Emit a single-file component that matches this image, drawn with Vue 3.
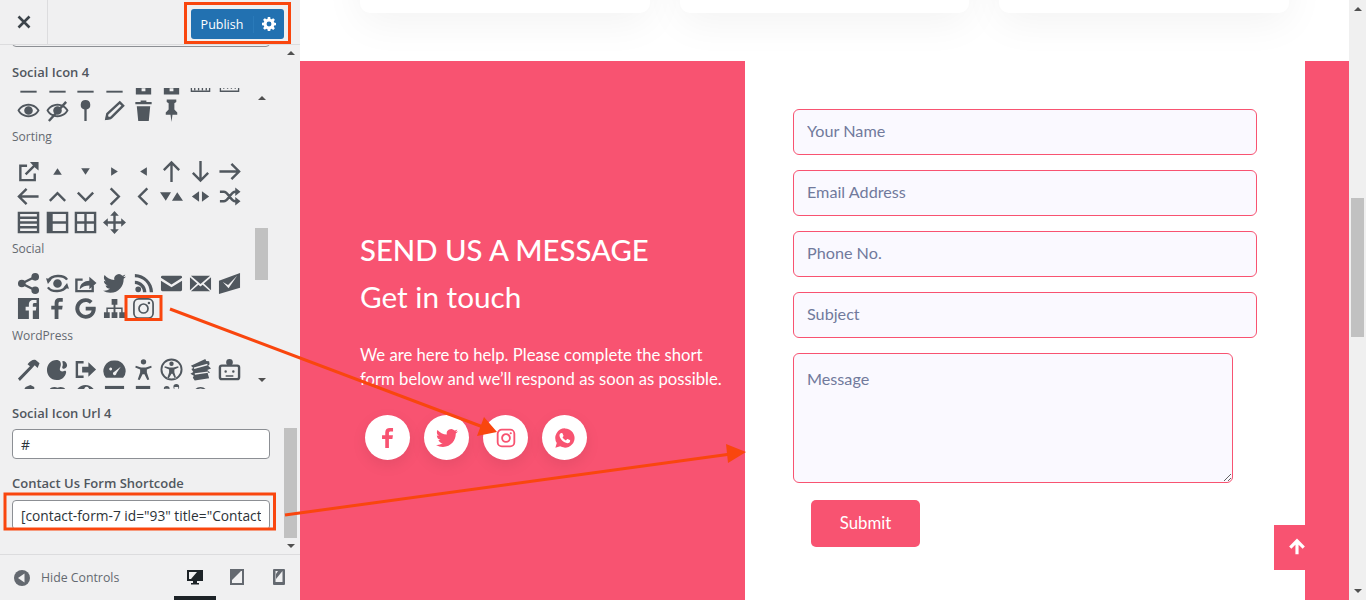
<script setup>
const circle = (cx, cy, r) => `M${cx - r} ${cy}a${r} ${r} 0 1 0 ${2 * r} 0a${r} ${r} 0 1 0 ${-2 * r} 0z`

const instagram = {
  s: 'M7 2h10a5 5 0 0 1 5 5v10a5 5 0 0 1-5 5H7a5 5 0 0 1-5-5V7a5 5 0 0 1 5-5z' + circle(12, 12, 4.7),
  d: circle(17.7, 6.3, 1.3),
  mid: true,
}
const twitter = 'M23.95 4.57a10 10 0 0 1-2.82.77 4.96 4.96 0 0 0 2.16-2.72c-.95.55-2 .96-3.12 1.19a4.92 4.92 0 0 0-8.38 4.48C7.69 8.1 4.07 6.13 1.64 3.16a4.82 4.82 0 0 0-.67 2.48c0 1.7.87 3.21 2.19 4.1a4.9 4.9 0 0 1-2.23-.61v.06c0 2.38 1.7 4.38 3.95 4.83a5 5 0 0 1-2.21.08 4.94 4.94 0 0 0 4.6 3.42A9.87 9.87 0 0 1 0 19.54a14 14 0 0 0 7.55 2.21c9.05 0 14-7.5 14-13.98 0-.21 0-.42-.02-.63a9.94 9.94 0 0 0 2.46-2.55z'
const fbF = 'M9 23V13H5.5V9H9V6c0-3.5 2-5 5-5h3.5v4H15c-1.5 0-2 .7-2 2v2h4.4l-.6 4H13v10z'

const topIcons = [
  { d: 'M3.5 18.5h17v2h-17z' },
  { d: 'M3.5 18.5h17v2h-17z' },
  { d: 'M3.5 18.5h17v2h-17z' },
  { d: 'M3.5 18.5h17v2h-17z' },
  { d: 'M4 12h16v10.5H4zM10 16h4v3h-4z' },
  { d: 'M4 12h16v10.5H4zM10 16h4v3h-4z' },
  { s: 'M2.5 12v7h19v-7M6 15v3M10 15v3M14 15v3M18 15v3' , thin: true },
  { s: 'M2.5 12v7h19v-7M6 15v1.5M10 15v1.5M14 15v1.5M18 15v1.5', thin: true },
  { d: 'M12 5C6 5 2 9 .5 12 2 15 6 19 12 19s10-4 11.5-7C22 9 18 5 12 5zm0 2c4.5 0 7.8 2.7 9.3 5-1.5 2.3-4.8 5-9.3 5s-7.8-2.7-9.3-5C4.2 9.7 7.5 7 12 7zM12 7.5a4.5 4.5 0 1 0 0 9 4.5 4.5 0 0 0 0-9z' },
  { d: 'M12 5C6 5 2 9 .5 12 2 15 6 19 12 19s10-4 11.5-7C22 9 18 5 12 5zm0 2c4.5 0 7.8 2.7 9.3 5-1.5 2.3-4.8 5-9.3 5s-7.8-2.7-9.3-5C4.2 9.7 7.5 7 12 7zM12 7.5a4.5 4.5 0 1 0 0 9 4.5 4.5 0 0 0 0-9z', s: 'M3 23 21 3' },
  { d: 'M12 1a5 5 0 0 0-1.2 9.85V23h2.4V10.85A5 5 0 0 0 12 1z' },
  { s: 'M17.5 3.5l3.5 3.5L8.5 19.5 3.5 20.5l1-5z', d: 'M2.5 22l1-6 5 5z' },
  { d: 'M9 1.5h6V3h5.5v2.5h-17V3H9zM5 7.5h14L17.5 23h-11z' },
  { d: 'M7 .5h10V3l-2 1.5V11l3 3v2.5h-5L12 24l-1-7.5H6V14l3-3V4.5L7 3z' },
]
const sortIcons = [
  { s: 'M10.5 6H3.5v15h15v-7M9 15 19.5 4.5', d: 'M13.5 2h9v9L19 8 16 5z' },
  { d: 'M7.5 15.5 12 8.5l4.5 7z' },
  { d: 'M7.5 8.5h9L12 15.5z' },
  { d: 'M8.5 7.5 15.5 12l-7 4.5z' },
  { d: 'M15.5 7.5v9L8.5 12z' },
  { s: 'M12 23V3M4 10.5 12 2.5l8 8' },
  { s: 'M12 1v20M4 13.5l8 8 8-8' },
  { s: 'M1.5 12h20M14 4l8 8-8 8' },
  { s: 'M22.5 12h-20M10 4l-8 8 8 8' },
  { s: 'M4 16.5 12 8.5l8 8' },
  { s: 'M4 8 12 16l8-8' },
  { s: 'M8 3.5 16.5 12 8 20.5' },
  { s: 'M16 3.5 7.5 12l8.5 8.5' },
  { d: 'M0 7.5h11.5L6 16.5zM12.5 16.5 18 7.5l6 9z' },
  { d: 'M10.5 6.5v11L3 12zM13.5 6.5v11L21 12z' },
  { s: 'M2 7h4c5 0 7 10 12 10h2M2 17h4c5 0 7-10 12-10h2', d: 'M18 2.5 23.5 7 18 11.5zM18 12.5l5.5 4.5-5.5 4.5z' },
  { s: 'M2 2h20v20H2zM2 7h20M2 12h20M2 17h20' },
  { s: 'M2 2h20v20H2zM2 12h20', d: 'M2 2h5v20H2z' },
  { s: 'M2 2h20v20H2zM2 12h20M12 2v20' },
  { s: 'M12 4v16M4 12h16', d: 'M12 0l4.5 5h-9zM12 24l-4.5-5h9zM0 12l5-4.5v9zM24 12l-5 4.5v-9z' },
]
const socialIcons = [
  { d: circle(19, 5, 4) + circle(5, 12, 4) + circle(19, 19, 4), s: 'M19 5 5 12l14 7' },
  { s: 'M2.5 9C6 3 18 2.5 22 8M21.5 15C18 21 6 21.5 2 16', d: circle(12, 12, 4.5) + 'M0 6.5l6 1-4 5zM24 17.5l-6-1 4-5z' },
  { s: 'M9 8H2.5v12h17v-6', d: 'M6 18c0-6 5-9 10-9V5l7.5 6.5L16 18v-4c-4 0-7 1-10 4z' },
  { d: twitter },
  { d: 'M3 2v3.5c8.5 0 15.5 7 15.5 15.5H22C22 11 13 2 3 2zm0 7v3.5c4.5 0 8.5 4 8.5 8.5H15C15 14.5 9.5 9 3 9z' + circle(6.5, 18, 3) },
  { d: 'M2.5 4h19A1.5 1.5 0 0 1 23 5.5V6l-11 7L1 6v-.5A1.5 1.5 0 0 1 2.5 4zM1 9l11 7 11-7v9.5a1.5 1.5 0 0 1-1.5 1.5h-19A1.5 1.5 0 0 1 1 18.5z' },
  { d: 'M2 4h20L12 12.5zM1 5.5 8.5 12 1 19zM23 5.5 15.5 12 23 19zM2 20l7.8-6.8L12 15l2.2-1.8L22 20z' },
  { d: 'M1 9 23 1v15.5L1 23zM5 10.5l5.5 3L20 4l-9 13z' },
  { d: 'M1 1h22v22h-6.5v-9h3.2l.5-3.7h-3.7V8c0-1.1.5-1.8 2-1.8h1.9V3h-3c-3.6 0-5 2.1-5 5v2.3H9V14h3.4v9H1z' },
  { d: fbF },
  { d: 'M12.2 10.3v3.8h6.2c-.7 3-3 4.6-6.2 4.6a6.7 6.7 0 0 1 0-13.4c1.7 0 3.2.6 4.4 1.7l2.8-2.8A10.7 10.7 0 1 0 12.2 22.7c6.2 0 10.5-4.4 10.5-10.6 0-.6 0-1.2-.2-1.8z' },
  { d: 'M9 2h6v6h-2v3h7.5v5H23v6h-6v-6h2v-3.5h-6V16h2v6H9v-6h2v-3.5H5V16h2v6H1v-6h2.5v-5H11V8H9z' },
  instagram,
]
const wpIcons = [
  { d: 'M1 21.5 13.5 8.5 11 6.500C14 2.500 17 1 19.500 2L23.500 5.500 21.500 10.500 18.500 7.500 15.500 11 3 24z' },
  { d: 'M11 2C5 2 1 7 1 12.5S5 23 11 23c5 0 9-3 10-8 .3-1.5-1-2-2-1.5-2 1-4 .5-4.5-1-.5-2 1-3.500 1-5.500s-.5-3-1-3.500C13.500 2.500 12 2 11 2zM17.500 3c2.500 0 4.500 2 4.500 4.500S19 12 17.500 11c-1-.8-.5-2 0-3.500s-1-4.500 0-4.500z' },
  { s: 'M10 4.500H3v15h7', d: 'M8.5 9H15V4.500l8 7.500-8 7.500V15H8.5z' },
  { d: 'M12 2.500A11 11 0 0 0 3 20.500h18A11 11 0 0 0 12 2.500zM6.500 11.500a1.500 1.500 0 1 1 0 .01zM14 16l4.500-7-7 5.500a1.800 1.800 0 1 0 2.500 1.500z' },
  { d: circle(12, 4, 2.8) + 'M4 8 9.500 10h5L20 8l.6 1.800L15.500 12v3l2.500 7.500-2 .5L13 17h-2l-3 6-2-.5L8.500 15v-3L3.400 9.800z' },
  { d: circle(12, 12, 11.5) + circle(12, 12, 9.500) + circle(12, 6, 2.3) + 'M5 8.500 10 10h4l5-1.500.4 1.500-4.400 2v3l2 6-1.500.5-2.500-5h-1L9 21.500 7.500 21 9.500 15v-3L4.600 10z' },
  { d: 'M2 8 17 1l1 2 3 .5.5 3L20 8l3 3-4 1.500 3 2.500-2.500 1L21 21 6 23.500l-2-3 1-2-3.500-2 3-2-2-3 2-1zM5 10 19 6l.5 1.500L5.500 11.500zM6 16l14-2 .2 1.500-14 2z' },
  { s: 'M4 8h16a2 2 0 0 1 2 2v10a2 2 0 0 1-2 2H4a2 2 0 0 1-2-2V10a2 2 0 0 1 2-2z', d: circle(12, 4.5, 3.5) + circle(8, 14, 1.3) + circle(16, 14, 1.3) + 'M8 18h8v1.500H8z' },
  { d: 'M6 8l3-5 5-2 4 2v5z' },
  { d: 'M3 8c0-4 5-6 9-4 4-2 9 0 9 4z' },
  { d: 'M2 8c2-5 6-7 10-7s8 2 10 7zM12 3a3 3 0 0 0 0 5h3a3 3 0 0 0-3-5z' },
  { d: 'M2 2h20v6H2z' },
  { d: 'M4 2h15v6H4z' },
  { d: circle(7, 5, 3) + circle(17, 3, 3) + 'M5 5h4v3H5zM15 3h4v5h-4z' },
  { d: 'M5 8a7.500 7.500 0 0 1 14 0h-2a5.500 5.500 0 0 0-10 0z' },
]
const groups = [
  { items: topIcons },
  { label: 'Sorting', items: sortIcons },
  { label: 'Social', items: socialIcons },
  { label: 'WordPress', items: wpIcons },
]
const fields = ['Your Name', 'Email Address', 'Phone No.', 'Subject']
</script>

<template>
  <div class="screen">
    <aside class="sidebar">
      <header class="topbar">
        <button class="close" aria-label="Close">
          <svg viewBox="0 0 20 20" width="20" height="20"><path d="M4.500 4.500l11 11M15.500 4.500l-11 11" /></svg>
        </button>
        <div class="publish">
          <span class="publish-label">Publish</span>
          <span class="publish-gear">
            <svg viewBox="0 0 20 20" width="14" height="14">
              <path fill-rule="evenodd" d="M8.300 0h3.400l.5 2.700 1.500.6L16 1.700l2.400 2.400-1.600 2.300.6 1.500 2.600.5v3.400l-2.600.5-.6 1.500 1.600 2.300-2.400 2.400-2.300-1.600-1.500.6-.5 2.700H8.300l-.5-2.700-1.500-.6L4 18.300l-2.400-2.400 1.600-2.300-.6-1.500L0 11.700V8.300l2.600-.5.6-1.500-1.600-2.300L4 1.700l2.300 1.600 1.500-.6zM10 6.500a3.500 3.500 0 1 0 0 7 3.500 3.500 0 0 0 0-7z" />
            </svg>
          </span>
        </div>
      </header>

      <div class="panel">
        <div class="controls">
          <div class="stub-input"></div>
          <div class="ctl-label first">Social Icon 4</div>
          <div class="picker">
            <div class="picker-window">
              <div class="picker-inner">
                <template v-for="(g, gi) in groups" :key="gi">
                  <div v-if="g.label" class="group-label">{{ g.label }}</div>
                  <div class="icon-grid">
                    <svg v-for="(ic, i) in g.items" :key="i" class="pick-icon" viewBox="0 0 24 24" width="23" height="23">
                      <path v-if="ic.d" class="fill" fill-rule="evenodd" :d="ic.d" />
                      <path v-if="ic.s" class="line" :class="{ thin: ic.thin, mid: ic.mid }" :d="ic.s" />
                    </svg>
                  </div>
                </template>
              </div>
            </div>
            <div class="sbar">
              <i class="tri-up"></i>
              <b class="thumb pick-thumb"></b>
              <i class="tri-down pick-down"></i>
            </div>
          </div>
          <div class="ctl-label">Social Icon Url 4</div>
          <input class="ctl-input" value="#" />
          <div class="ctl-label">Contact Us Form Shortcode</div>
          <input class="ctl-input short" value='[contact-form-7 id="93" title="Contact' />
        </div>
        <div class="sbar panel-bar">
          <i class="tri-up"></i>
          <b class="thumb panel-thumb"></b>
          <i class="tri-down panel-down"></i>
        </div>
      </div>

      <footer class="foot">
        <span class="hide">
          <svg viewBox="0 0 16 16" width="16" height="16">
            <circle cx="8" cy="8" r="8" fill="#646970" />
            <path d="M10.500 3.500v9L4 8z" fill="#f0f0f1" />
          </svg>
          Hide Controls
        </span>
        <div class="devices">
          <span class="device active">
            <svg viewBox="0 0 20 20" width="20" height="20"><path fill-rule="evenodd" d="M2 3h16v11h-6v2h2v1.500H6V16h2v-2H2zM4 5v7h2l6-7z" fill="#1d2327" /></svg>
          </span>
          <span class="device">
            <svg viewBox="0 0 20 20" width="20" height="20"><path fill-rule="evenodd" d="M3 2h14v16H3zM5 4v12h10V4zM5 4h9L5 13z" fill="#646970" /></svg>
          </span>
          <span class="device">
            <svg viewBox="0 0 20 20" width="20" height="20"><path fill-rule="evenodd" d="M5 2h10a1 1 0 0 1 1 1v14a1 1 0 0 1-1 1H5a1 1 0 0 1-1-1V3a1 1 0 0 1 1-1zM6.500 4v11h7V4zM9 4h4.500L7 12V7z" fill="#646970" /></svg>
          </span>
        </div>
      </footer>
    </aside>

    <main class="page">
      <div class="cards">
        <div class="card"></div>
        <div class="card"></div>
        <div class="card"></div>
      </div>
      <section class="contact">
        <div class="intro">
          <h3>SEND US A MESSAGE</h3>
          <h4>Get in touch</h4>
          <p>We are here to help. Please complete the short form below and we’ll respond as soon as possible.</p>
          <div class="socials">
            <a class="soc">
              <svg viewBox="0 0 24 24" width="22" height="22"><path :d="fbF" /></svg>
            </a>
            <a class="soc">
              <svg viewBox="0 0 24 24" width="22" height="22"><path :d="twitter" /></svg>
            </a>
            <a class="soc">
              <svg viewBox="0 0 24 24" width="20" height="20">
                <path class="ig" :d="instagram.s" />
                <path :d="instagram.d" />
              </svg>
            </a>
            <a class="soc">
              <svg viewBox="0 0 24 24" width="22" height="22">
                <path fill-rule="evenodd" d="M12 1.500A10.500 10.500 0 0 0 3 17.500L1.500 22.500l5.200-1.400A10.500 10.500 0 1 0 12 1.500zM8.300 6.500c.4 0 .8 0 1 .5l1 2.400c.1.300 0 .6-.2.900l-.8 1c.8 1.500 2 2.600 3.700 3.400l1.100-1.300c.2-.3.500-.3.800-.2l2.300 1.100c.4.200.5.500.4.900-.2 1.600-1.500 2.500-3 2.400-4-.4-8.400-4.400-8.600-8.200-.1-1.300.8-2.900 2.300-2.900z" />
              </svg>
            </a>
          </div>
        </div>
        <form class="form" @submit.prevent>
          <input v-for="f in fields" :key="f" class="field" :placeholder="f" />
          <textarea class="field area" placeholder="Message"></textarea>
          <button class="submit">Submit</button>
        </form>
        <div class="rest"></div>
      </section>
      <a class="to-top">
        <svg viewBox="0 0 16 16" width="18" height="18"><path d="M8 14.500V3M2 8.500 8 2.500l6 6" /></svg>
      </a>
    </main>

    <div class="sbar page-bar">
      <i class="tri-up"></i>
      <b class="thumb page-thumb"></b>
      <i class="tri-down page-down"></i>
    </div>

    <svg class="marks" viewBox="0 0 1366 600" width="1366" height="600">
      <g fill="none" stroke="#f9460e" stroke-width="3">
        <rect x="185.500" y="3.500" width="104" height="39" />
        <rect x="126" y="296.500" width="35" height="23" />
        <rect x="5" y="494" width="269.500" height="35" />
        <path d="M170 309 483 427M285 515 731 454" />
      </g>
      <path d="M497 432 477 436 484 417zM746 452 728 463 726 444z" fill="#f9460e" />
    </svg>
  </div>
</template>

<style>
html, body { margin: 0; overflow: hidden; }
</style>

<style scoped>
.screen {
  position: relative;
  display: flex;
  width: 1366px;
  height: 600px;
  overflow: hidden;
  background: #fff;
}

/* customizer side */
.sidebar {
  width: 300px;
  flex: none;
  display: flex;
  flex-direction: column;
  background: #f0f0f1;
  font-family: "Open Sans", "Noto Sans", sans-serif;
  color: #50575e;
}
.topbar {
  height: 45px;
  box-sizing: border-box;
  flex: none;
  display: flex;
  justify-content: space-between;
  border-bottom: 1px solid #dcdcde;
}
.close {
  width: 48px;
  padding: 0;
  border: 0;
  border-right: 1px solid #dcdcde;
  background: transparent;
  display: flex;
  align-items: center;
  justify-content: center;
}
.close path { stroke: #3c434a; stroke-width: 2.600; fill: none; }
.publish {
  width: 93px;
  height: 30px;
  margin: 9px 16px 0 0;
  display: flex;
  align-items: center;
  background: #2271b1;
  border-radius: 3px;
  color: #fff;
  font-size: 12.500px;
}
.publish-label { width: 62px; text-align: center; border-right: 1px solid #2a7ab9; }
.publish-gear { flex: 1; display: flex; justify-content: center; }
.publish-gear path { fill: #fff; }

.panel {
  flex: 1;
  min-height: 0;
  display: flex;
  overflow: hidden;
}
.controls {
  width: 284px;
  box-sizing: border-box;
  padding-left: 12px;
  flex: none;
}
.stub-input {
  width: 258px;
  height: 30px;
  margin-top: -28px;
  box-sizing: border-box;
  border: 1px solid #8c8f94;
  border-radius: 4px;
}
.ctl-label {
  margin-top: 14px;
  font-size: 13px;
  font-weight: 600;
  line-height: 20px;
  color: #50575e;
}
.ctl-label.first { margin-top: 15px; }
.picker {
  display: flex;
  height: 301px;
  margin-top: 6px;
}
.picker-window {
  width: 243px;
  overflow: hidden;
}
.picker-inner { margin-top: -16px; }
.group-label {
  line-height: 27px;
  margin-bottom: 8.500px;
  font-size: 12px;
  color: #646970;
}
.icon-grid {
  display: grid;
  grid-template-columns: repeat(8, 28.700px);
  grid-auto-rows: 25.500px;
  margin-left: 2px;
  place-items: center;
}
.pick-icon { display: block; }
.fill { fill: #50575e; }
.line { fill: none; stroke: #50575e; stroke-width: 2.500; }
.line.thin { stroke-width: 1.400; }
.line.mid { stroke-width: 1.800; }
.ctl-input {
  display: block;
  width: 258px;
  height: 30px;
  margin-top: 6px;
  box-sizing: border-box;
  padding: 0 8px;
  border: 1px solid #8c8f94;
  border-radius: 4px;
  background: #fff;
  font: 13.750px "Open Sans", "Noto Sans", sans-serif;
  color: #2c3338;
  outline: none;
}
.ctl-input.short { margin-top: 7px; }

/* fake scrollbars */
.sbar {
  display: flex;
  flex-direction: column;
  align-items: center;
  width: 13px;
  flex: none;
}
.tri-up, .tri-down {
  width: 0;
  height: 0;
  border-left: 4px solid transparent;
  border-right: 4px solid transparent;
  flex: none;
}
.tri-up { border-bottom: 4px solid #505050; margin-top: 8px; }
.tri-down { border-top: 4px solid #505050; }
.thumb { display: block; width: 13px; background: #c1c1c1; flex: none; }
.pick-thumb { height: 52px; margin-top: 128px; }
.pick-down { margin-top: 98px; }
.panel-bar .tri-up { margin-top: 6px; }
.panel-thumb { height: 110px; margin-top: 373px; }
.panel-down { margin-top: 6px; }
.page-bar { width: 17px; background: #f0f0f0; }
.page-bar .tri-up { margin-top: 7px; }
.page-thumb { height: 139px; margin-top: 187px; }
.page-down { margin-top: 252px; }

.foot {
  height: 46px;
  box-sizing: border-box;
  flex: none;
  display: flex;
  align-items: center;
  justify-content: space-between;
  border-top: 1px solid #dcdcde;
}
.hide {
  display: flex;
  align-items: center;
  gap: 11px;
  margin-left: 14px;
  font-size: 12.300px;
  color: #646970;
}
.devices { display: flex; align-self: stretch; }
.device {
  width: 42px;
  box-sizing: border-box;
  display: flex;
  align-items: center;
  justify-content: center;
  padding-top: 2px;
  border-bottom: 4px solid transparent;
}
.device.active { border-bottom-color: #1d2327; }

/* site side */
.page {
  position: relative;
  flex: 1;
  min-width: 0;
  font-family: Lato, "Open Sans", sans-serif;
}
.cards {
  display: grid;
  grid-template-columns: repeat(3, 1fr);
  gap: 30px;
  padding: 0 60px;
  margin-bottom: 48px;
}
.card {
  height: 213px;
  margin-top: -200px;
  background: #fff;
  border-radius: 10px;
  box-shadow: 0 10px 40px rgba(0, 0, 0, 0.05);
}
.contact {
  display: flex;
  height: 539px;
  background: #f85371;
}
.intro {
  width: 445px;
  flex: none;
  box-sizing: border-box;
  padding: 170px 0 0 60px;
  color: #fff;
}
.intro h3 {
  margin: 0;
  font-size: 29.300px;
  font-weight: 500;
  line-height: 38px;
}
.intro h4 {
  margin: 9px 0 0;
  font-size: 29.700px;
  font-weight: 400;
  line-height: 38px;
}
.intro p {
  margin: 27px 0 0;
  font-size: 16.700px;
  line-height: 24px;
  width: 375px;
}
.socials {
  display: flex;
  gap: 14px;
  margin: 24px 0 0 5px;
}
.soc {
  width: 45px;
  height: 45px;
  border-radius: 50%;
  background: #fff;
  display: flex;
  align-items: center;
  justify-content: center;
  box-shadow: 0 5px 15px rgba(0, 0, 0, 0.08);
}
.soc svg path { fill: #f85371; }
.soc svg path.ig { fill: none; stroke: #f85371; stroke-width: 2.200; }
.form {
  width: 560px;
  flex: none;
  box-sizing: border-box;
  padding: 48px 0 0 48px;
  background: #fff;
  display: flex;
  flex-direction: column;
  align-items: flex-start;
  gap: 15px;
}
.field {
  width: 464px;
  height: 46px;
  box-sizing: border-box;
  padding: 0 13px 3px;
  border: 1px solid #f85371;
  border-radius: 6px;
  background: #faf9ff;
  font: 16.200px Lato, "Open Sans", sans-serif;
  color: #444;
  outline: none;
}
.field::placeholder { color: #717a9c; opacity: 1; }
.area {
  width: 440px;
  height: 130px;
  padding: 15px 13px;
  display: block;
}
.submit {
  width: 109px;
  height: 47px;
  margin: 2px 0 0 18px;
  padding: 0 0 2px;
  border: 0;
  border-radius: 5px;
  background: #f85371;
  color: #fff;
  font: 16.800px Lato, "Open Sans", sans-serif;
}
.rest { flex: 1; }
.to-top {
  position: absolute;
  left: 974px;
  top: 525px;
  width: 45px;
  height: 45px;
  padding-bottom: 2px;
  box-sizing: border-box;
  background: #f85371;
  display: flex;
  align-items: center;
  justify-content: center;
}
.to-top path { fill: none; stroke: #fff; stroke-width: 2.800; }

/* annotations drawn on top of the screenshot */
.marks {
  position: absolute;
  left: 0;
  top: 0;
  pointer-events: none;
}
</style>
